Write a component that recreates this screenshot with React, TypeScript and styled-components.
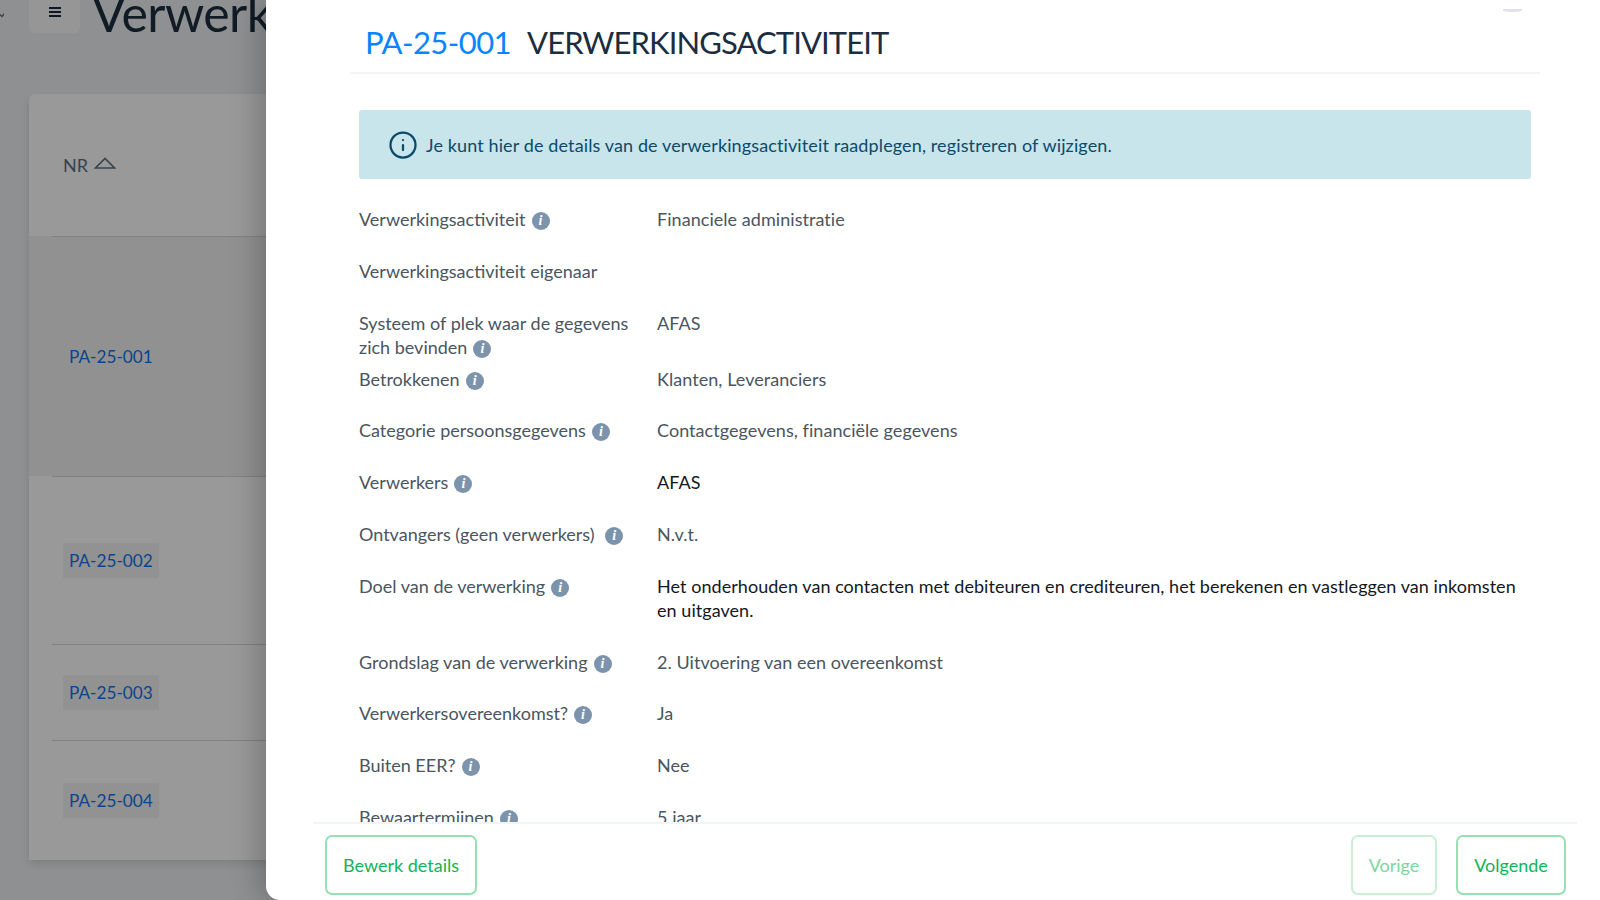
import React from 'react';
import styled, { createGlobalStyle } from 'styled-components';
import { Info } from 'lucide-react';

const GlobalStyle = createGlobalStyle`
  html, body {
    margin: 0;
    padding: 0;
    height: 100%;
    overflow: hidden;
  }
  body {
    font-family: 'Lato', 'Noto Sans', Arial, sans-serif;
    color: #4a5560;
  }
`;

const Page = styled.div`
  position: relative;
  width: 1600px;
  height: 900px;
  overflow: hidden;
  background: #eff1f3;
  padding-left: 29px;
  box-sizing: border-box;
`;

const EdgeChevron = styled.svg`
  position: absolute;
  top: 12px;
  left: 0;
  color: #5d7086;
`;

const TopBar = styled.div`
  display: flex;
  align-items: flex-start;
  height: 33px;
  gap: 12px;
`;

const MenuButton = styled.div`
  width: 51px;
  height: 33px;
  padding-bottom: 9px;
  box-sizing: border-box;
  background: #fafafa;
  border-radius: 0 0 6px 6px;
  display: flex;
  align-items: center;
  justify-content: center;
  color: #1a2b3c;
`;

const PageTitle = styled.h1`
  margin: -12px 0 0;
  font-size: 50px;
  line-height: 50px;
  font-weight: 400;
  letter-spacing: -0.6px;
  color: #1c2d3f;
  white-space: nowrap;
`;

const Card = styled.div`
  margin-top: 61px;
  width: 1500px;
  background: #fff;
  border-radius: 6px 6px 0 0;
  box-shadow: 0 4px 10px rgba(0, 0, 0, 0.12);
`;

const HeadRow = styled.div`
  height: 142px;
  display: flex;
  align-items: center;
  gap: 6px;
  padding-left: 34px;
  color: #5d7086;
  font-size: 18px;
`;

const SortIcon = styled.svg`
  margin-bottom: 5px;
`;

const TableRow = styled.div<{ $height: number; $hover?: boolean }>`
  height: ${p => p.$height}px;
  padding-left: 34px;
  display: flex;
  align-items: center;
  position: relative;
  background: ${p => (p.$hover ? '#f2f2f2' : 'transparent')};
  &::before {
    content: '';
    position: absolute;
    top: 0;
    left: 23px;
    right: 0;
    height: 1px;
    background: #d4d9de;
  }
`;

const RowLink = styled.span<{ $chip?: boolean }>`
  display: inline-block;
  padding: 7px 6px;
  color: #1273e6;
  font-size: 17.2px;
  line-height: 21px;
  background: ${p => (p.$chip ? '#f4f4f4' : 'transparent')};
`;

const Backdrop = styled.div`
  position: absolute;
  inset: 0;
  background: rgba(0, 0, 0, 0.4);
`;

const Drawer = styled.aside`
  position: absolute;
  top: 0;
  right: 0;
  bottom: 0;
  width: 1334px;
  background: #fff;
  border-bottom-left-radius: 14px;
  box-shadow: -8px 0 28px rgba(0, 0, 0, 0.22);
  display: flex;
  flex-direction: column;
`;

const CloseStub = styled.div`
  position: absolute;
  top: 9px;
  left: 1237px;
  width: 19px;
  height: 3px;
  border-radius: 0 0 50% 50%;
  background: #e2e0ea;
`;

const DrawerHeader = styled.header`
  margin: 0 60px 0 84px;
  height: 72px;
  padding: 0 0 0 15px;
  border-bottom: 2px solid #f4f4f4;
  display: flex;
  align-items: flex-end;
  gap: 16px;
  font-size: 31px;
  line-height: 56px;
  color: #1c2d3f;
`;

const Code = styled.span`
  color: #0a84ff;
  letter-spacing: -0.55px;
  padding-bottom: 2px;
`;

const HeaderTitle = styled.span`
  letter-spacing: -0.9px;
  padding-bottom: 2px;
`;

const DrawerBody = styled.div`
  flex: 1;
  min-height: 0;
  overflow: hidden;
  padding: 36px 69px 0 93px;
`;

const Banner = styled.div`
  height: 69px;
  box-sizing: border-box;
  background: #c7e5eb;
  border-radius: 3px;
  margin-bottom: 28px;
  padding-left: 29px;
  display: flex;
  align-items: center;
  gap: 8px;
  color: #0c4a6a;
  font-size: 18px;
  letter-spacing: 0.12px;
`;

const Details = styled.dl`
  display: grid;
  grid-template-columns: 298px 1fr;
  margin: 0;
  font-size: 18px;
  line-height: 24px;
`;

const Label = styled.dt`
  padding: 0 8px 8px 0;
  color: #4a5560;
`;

const Value = styled.dd<{ $dark?: boolean }>`
  margin: 0;
  min-height: 51.8px;
  box-sizing: border-box;
  padding-bottom: 27.8px;
  letter-spacing: 0.05px;
  color: ${p => (p.$dark ? '#14181c' : '#4a5560')};
`;

const InfoDot = styled.span`
  display: inline-block;
  width: 18px;
  height: 18px;
  margin-left: 6px;
  border-radius: 50%;
  background: #7b93ab;
  color: #fff;
  font-family: 'Liberation Serif', serif;
  font-style: italic;
  font-weight: 700;
  font-size: 14px;
  line-height: 18px;
  text-align: center;
  vertical-align: 1px;
`;

const DrawerFooter = styled.footer`
  margin: 0 23px 0 47px;
  height: 78px;
  box-sizing: border-box;
  border-top: 2px solid #f1f5f6;
  padding: 11px 11px 0 12px;
  display: flex;
  gap: 19px;
`;

const FooterButton = styled.button<{ $width: number; $faded?: boolean; $push?: boolean }>`
  width: ${p => p.$width}px;
  height: 60px;
  margin-left: ${p => (p.$push ? 'auto' : '0')};
  background: #fff;
  border: 2px solid ${p => (p.$faded ? '#c9efd6' : '#97e0b3')};
  border-radius: 7px;
  color: ${p => (p.$faded ? '#7dd6a0' : '#0fb457')};
  font-family: inherit;
  font-size: 18px;
  padding: 0;
`;

type DetailRow = {
  label: string;
  value?: string;
  dark?: boolean;
  noInfo?: boolean;
};

const rows: DetailRow[] = [
  { label: 'Verwerkingsactiviteit', value: 'Financiele administratie' },
  { label: 'Verwerkingsactiviteit eigenaar', noInfo: true },
  { label: 'Systeem of plek waar de gegevens zich bevinden', value: 'AFAS' },
  { label: 'Betrokkenen', value: 'Klanten, Leveranciers' },
  { label: 'Categorie persoonsgegevens', value: 'Contactgegevens, financiële gegevens' },
  { label: 'Verwerkers', value: 'AFAS', dark: true },
  { label: 'Ontvangers (geen verwerkers) ', value: 'N.v.t.' },
  {
    label: 'Doel van de verwerking',
    value: 'Het onderhouden van contacten met debiteuren en crediteuren, het berekenen en vastleggen van inkomsten en uitgaven.',
    dark: true,
  },
  { label: 'Grondslag van de verwerking', value: '2. Uitvoering van een overeenkomst' },
  { label: 'Verwerkersovereenkomst?', value: 'Ja' },
  { label: 'Buiten EER?', value: 'Nee' },
  { label: 'Bewaartermijnen', value: '5 jaar' },
];

const App: React.FC = () => {
  return (
    <Page>
      <GlobalStyle />
      <EdgeChevron width="4" height="6" viewBox="0 0 4 6" fill="none" stroke="currentColor" strokeWidth="1.5">
        <path d="M-2 1l4 3.5L5 1" />
      </EdgeChevron>
      <TopBar>
        <MenuButton>
          <svg width="12" height="10" viewBox="0 0 12 10" fill="currentColor">
            <rect y="0" width="12" height="2" />
            <rect y="4" width="12" height="2" />
            <rect y="8" width="12" height="2" />
          </svg>
        </MenuButton>
        <PageTitle>Verwerkingsactiviteiten</PageTitle>
      </TopBar>
      <Card>
        <HeadRow>
          NR
          <SortIcon width="22" height="12" viewBox="0 0 22 12" fill="none" stroke="#5d7086" strokeWidth="1.6">
            <path d="M1.5 11h19L11 1.5z" />
          </SortIcon>
        </HeadRow>
        <TableRow $height={240} $hover>
          <RowLink>PA-25-001</RowLink>
        </TableRow>
        <TableRow $height={168}>
          <RowLink $chip>PA-25-002</RowLink>
        </TableRow>
        <TableRow $height={96}>
          <RowLink $chip>PA-25-003</RowLink>
        </TableRow>
        <TableRow $height={120}>
          <RowLink $chip>PA-25-004</RowLink>
        </TableRow>
      </Card>
      <Backdrop />
      <Drawer>
        <CloseStub />
        <DrawerHeader>
          <Code>PA-25-001</Code>
          <HeaderTitle>VERWERKINGSACTIVITEIT</HeaderTitle>
        </DrawerHeader>
        <DrawerBody>
          <Banner>
            <Info size={30} strokeWidth={1.8} />
            Je kunt hier de details van de verwerkingsactiviteit raadplegen, registreren of wijzigen.
          </Banner>
          <Details>
            {rows.map(row => (
              <React.Fragment key={row.label}>
                <Label>
                  {row.label}
                  {!row.noInfo && <InfoDot>i</InfoDot>}
                </Label>
                <Value $dark={row.dark}>{row.value}</Value>
              </React.Fragment>
            ))}
          </Details>
        </DrawerBody>
        <DrawerFooter>
          <FooterButton $width={152}>Bewerk details</FooterButton>
          <FooterButton $width={86} $faded $push>Vorige</FooterButton>
          <FooterButton $width={110}>Volgende</FooterButton>
        </DrawerFooter>
      </Drawer>
    </Page>
  );
};

export default App;
